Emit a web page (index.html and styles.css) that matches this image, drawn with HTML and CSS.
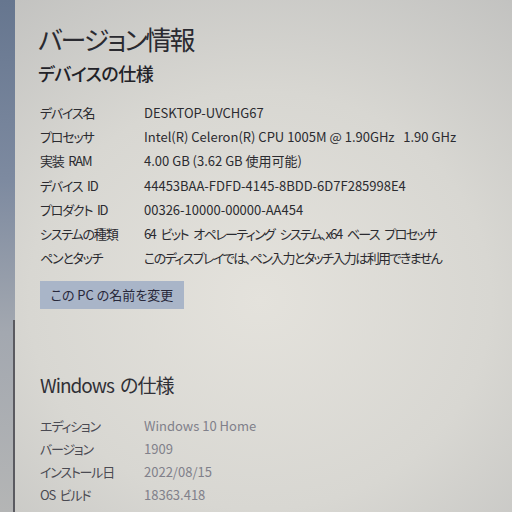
FILE: index.html
```html
<!DOCTYPE html>
<html lang="ja">

<head>
	<meta charset="UTF-8">
	<title>バージョン情報</title>
	<link rel="stylesheet" href="styles.css">
</head>

<body>
	<div class="screen">
		<div class="rail"><div class="scroll"></div></div>
		<div class="main">
			<h1>バージョン情報</h1>
			<h2>デバイスの仕様</h2>
			<div class="specs">
				<span class="j">デバイス名</span><span>DESKTOP-UVCHG67</span>
				<span class="j">プロセッサ</span><span>Intel(R) Celeron(R) CPU 1005M @ 1.90GHz&nbsp;&nbsp;&nbsp;1.90 GHz</span>
				<span class="j">実装 RAM</span><span>4.00 GB (3.62 GB 使用可能)</span>
				<span class="j">デバイス ID</span><span>44453BAA-FDFD-4145-8BDD-6D7F285998E4</span>
				<span class="j">プロダクト ID</span><span>00326-10000-00000-AA454</span>
				<span class="j">システムの種類</span><span class="jj">64 ビット オペレーティング システム、x64 ベース プロセッサ</span>
				<span class="j">ペンとタッチ</span><span class="jj">このディスプレイでは、ペン入力とタッチ入力は利用できません</span>
			</div>
			<a class="rename" href="#">この PC の名前を変更</a>

			<h3>Windows の仕様</h3>
			<div class="specs win">
				<span class="j">エディション</span><span>Windows 10 Home</span>
				<span class="j">バージョン</span><span>1909</span>
				<span class="j">インストール日</span><span>2022/08/15</span>
				<span class="j">OS ビルド</span><span>18363.418</span>
			</div>
			<a class="link" href="#">プロダクト キーの変更または Windows のエディションをアップグレード</a>
		</div>
	</div>
</body>

</html>
```

FILE: styles.css
```css
html,
body {
	margin: 0;
	padding: 0;
	height: 100%;
	overflow: hidden;
}

body {
	font-family: "Noto Sans CJK JP", "Noto Sans", sans-serif;
	font-feature-settings: "palt";
	color: #2b2b30;
}

.screen {
	display: flex;
	height: 512px;
	background:
		radial-gradient(ellipse 420px 380px at 260px 300px, #e4e2dc 0%, #d8d7d2 55%, #c2c2c0 100%);
}

/* 左の帯 */
.rail {
	width: 15px;
	flex: none;
	background: linear-gradient(#66768f 0%, #7d8aa0 35%, #a3a8b0 65%, #b4b5b5 100%);
	display: flex;
	justify-content: flex-end;
	align-items: flex-end;
}

.scroll {
	width: 2px;
	height: 192px;
	background: #5a5a60;
}

.main {
	flex: 1;
	padding: 19px 0 0 23px;
	white-space: nowrap;
}

h1 {
	margin: 0;
	font-size: 26px;
	font-weight: 400;
	line-height: 40px;
	letter-spacing: -2px;
	color: #2a2a30;
}

h2 {
	margin: 0;
	font-size: 18px;
	font-weight: 500;
	line-height: 28px;
	letter-spacing: -0.5px;
	color: #222228;
}

.specs {
	display: grid;
	grid-template-columns: 104px auto;
	margin: 14px 0 0 2px;
	font-size: 13px;
	line-height: 24.2px;
}

.j {
	letter-spacing: -1.2px;
	word-spacing: 3px;
}

.jj {
	letter-spacing: -1.6px;
	word-spacing: 4px;
}

.rename {
	display: inline-block;
	margin: 11px 0 0 2px;
	width: 144px;
	height: 28px;
	line-height: 28px;
	text-align: center;
	font-size: 13px;
	color: #28283a;
	background: #a9b5c8;
	text-decoration: none;
}

h3 {
	margin: 62px 0 0 2px;
	font-size: 19px;
	font-weight: 400;
	line-height: 28px;
	letter-spacing: -1px;
	word-spacing: 3px;
	color: #303036;
}

.win {
	margin-top: 15px;
	line-height: 23px;
	color: #4a4a52;
}

.win span:nth-child(even) {
	color: #80808a;
}

.link {
	display: block;
	margin: 8px 0 0 97px;
	font-size: 13px;
	letter-spacing: -1px;
	color: #3a66b8;
	text-decoration: none;
}
```
